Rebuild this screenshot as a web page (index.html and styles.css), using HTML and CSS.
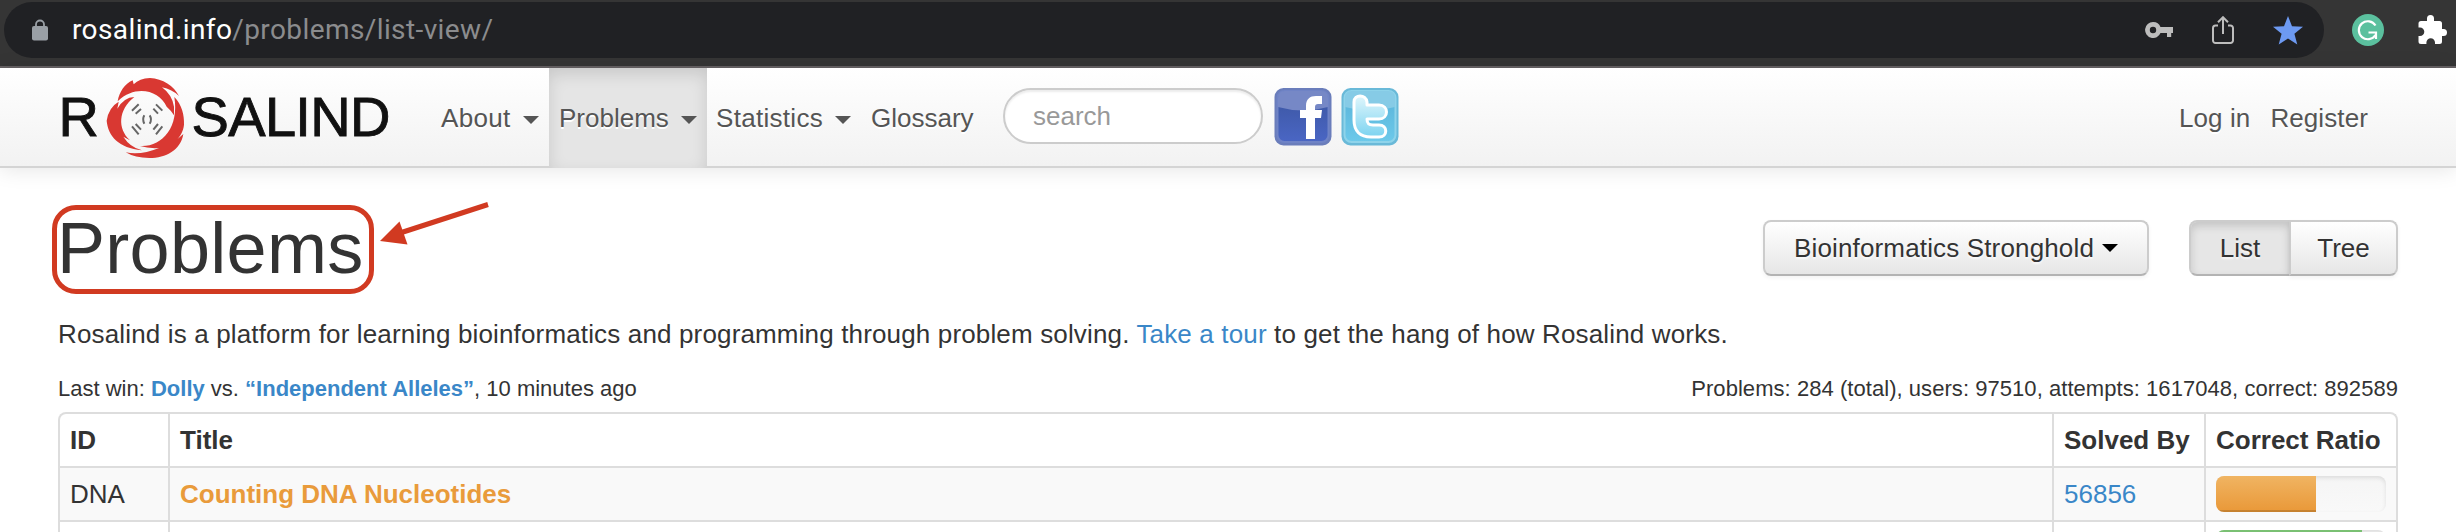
FILE: index.html
```html
<!DOCTYPE html>
<html lang="en">
<head>
<meta charset="utf-8">
<title>Rosalind | Problems</title>
<link rel="stylesheet" href="styles.css">
</head>
<body>
<div class="browser">
  <div class="omnibox">
    <svg class="lock" width="16" height="22" viewBox="0 0 16 22"><path d="M4 9V5.500a4 4 0 0 1 8 0V9" fill="none" stroke="#9aa0a6" stroke-width="1.800"/><rect y="7" width="16" height="14.500" rx="2" fill="#9aa0a6"/></svg>
    <span class="url"><span class="host">rosalind.info</span><span class="path">/problems/list-view/</span></span>
    <span class="tools">
      <svg width="28" height="16" viewBox="0 0 28 16"><path fill="#bdbdbd" fill-rule="evenodd" d="M8 0a8 8 0 1 0 7.500 11H22v4h4.200v-4H28V5H15.500A8 8 0 0 0 8 0Zm0 4.800a3.200 3.200 0 1 1 0 6.400 3.200 3.200 0 0 1 0-6.400Z"/></svg>
      <svg width="22" height="28" viewBox="0 0 22 28"><g fill="none" stroke="#bdbdbd" stroke-width="2"><path d="M6 9.500H3.500A2.500 2.500 0 0 0 1 12v12.500A2.500 2.500 0 0 0 3.500 27h15a2.500 2.500 0 0 0 2.500-2.500V12a2.500 2.500 0 0 0-2.500-2.500H16M11 18V1.500M6 6.200l5-5 5 5"/></g></svg>
      <svg width="30" height="29" viewBox="0 0 30 29"><path fill="#6d9af2" d="m15 0 4 10.300 11 .5-8.600 6.900L24.300 28.500 15 22.400 5.700 28.500l2.900-10.800L0 10.800l11-.5Z"/></svg>
    </span>
  </div>
  <svg class="grammarly" width="32" height="32" viewBox="0 0 32 32"><circle cx="16" cy="16" r="16" fill="#5bc09e"/><path d="M23.500 11.500A9 9 0 1 0 23.500 21M16.500 18.500h7.500V25" fill="none" stroke="#fff" stroke-width="2.200"/></svg>
  <svg class="puzzle" width="29" height="29" viewBox="0 0 29 29"><path fill="#fff" d="M3 6h6V3.500a3.500 3.500 0 0 1 7 0V6h5.500A2.500 2.500 0 0 1 24 8.500V14h1.500a3.500 3.500 0 0 1 0 7H24v5.500A2.500 2.500 0 0 1 21.500 29H17v-1.500a4.300 4.300 0 0 0-8.600 0V29H3a2.500 2.500 0 0 1-2.500-2.500V21H2a4.300 4.300 0 0 0 0-8.600H.5V8.500A2.500 2.500 0 0 1 3 6Z"/></svg>
</div>
<nav class="navbar">
  <svg class="logo" width="340" height="92" viewBox="58 72 340 92" role="img" aria-label="Rosalind">
    <text class="logo-text" x="58.500" y="136" textLength="40">R</text>
    <text class="logo-text" x="191.500" y="136" textLength="199">SALIND</text>
    <g transform="scale(.33333)">
      <g fill="#d93832">
        <path d="M353 304C358 276 374 252 398 241L401 253Q418 235 450 234C488 236 522 258 537 288Q516 268 486 262Q516 284 522 320L522 346Q512 330 500 320C478 272 408 252 353 304Z"/>
        <path d="M403 291Q372 292 352 326L356 305Q326 322 320 362C324 408 356 444 426 451Q390 442 370 410L390 421C352 386 354 330 403 291Z"/>
        <path d="M523 291C546 314 553 346 552 374C550 394 540 409 532 418L550 402C542 450 498 474 448 474Q405 474 377 457Q424 466 477 444Q446 446 420 438C486 442 538 382 523 291Z"/>
      </g>
      <g fill="none" stroke="#666" stroke-width="6">
        <path d="M396 332L416 313M407 341L423 327M468 313L487 332M460 326L474 341M396 379L416 403M407 372L423 389M487 379L468 403M474 372L460 389M433 346Q426 358 433 371M449 346Q457 358 449 371"/>
      </g>
    </g>
  </svg>
  <ul class="menu">
    <li class="about"><a>About</a><i class="caret"></i></li>
    <li class="problems active"><a>Problems</a><i class="caret"></i></li>
    <li class="statistics"><a>Statistics</a><i class="caret"></i></li>
    <li class="glossary"><a>Glossary</a></li>
  </ul>
  <div class="search">search</div>
  <div class="social">
    <svg width="58" height="60" viewBox="0 0 58 60">
      <defs><linearGradient id="fb" x2="0" y2="1"><stop stop-color="#3b559f"/><stop offset="1" stop-color="#4a66c4"/></linearGradient></defs>
      <rect x=".5" y="1" width="57" height="57.500" rx="9" fill="#6a7dbb"/><rect x="3.500" y="4" width="51" height="51" rx="7" fill="url(#fb)" stroke="#6f83c6" stroke-width="2"/>
      <path fill="#7688c6" d="M4 11q0-7 7-7h36q7 0 7 7v9q-25 7-50 0Z"/>
      <path fill="#fff" d="M32 52V31h-6v-8h6v-4c0-7 4-10 10-10h6v8h-4c-2 0-3 1-3 3v3h7l-1 8h-6v21Z"/>
    </svg>
    <svg width="58" height="60" viewBox="0 0 58 60">
      <defs><linearGradient id="tw" x2="0" y2="1"><stop stop-color="#58b2d8"/><stop offset="1" stop-color="#6cc9ea"/></linearGradient><linearGradient id="tt" x2="0" y2="1"><stop stop-color="#dff6fc"/><stop offset="1" stop-color="#7cd3f0"/></linearGradient></defs>
      <rect x=".5" y="1" width="57" height="57.500" rx="9" fill="#69b9d8"/><rect x="3.500" y="4" width="51" height="51" rx="7" fill="url(#tw)" stroke="#8ed3ea" stroke-width="2"/>
      <path fill="#86cbe6" d="M4 11q0-7 7-7h36q7 0 7 7v9q-25 7-50 0Z"/>
      <path fill="url(#tt)" stroke="#fff" stroke-width="3" stroke-linejoin="round" d="M13 15c0-8 12-8 13 0v3h12c10 0 10 14 0 14H26c0 5 2 6 6 6h6c9 0 9 12 0 12h-8c-11 0-17-6-17-17Z"/>
    </svg>
  </div>
  <div class="account"><a>Log in</a><a>Register</a></div>
</nav>
<main class="content">
  <header class="heading">
    <h1>Problems<span class="outline"></span>
      <svg class="arrow" width="116" height="50" viewBox="376 200 116 50"><path d="M488 204.500 400 233" stroke="#d13a21" stroke-width="5"/><path d="m380 241 19.500-19.500 8 23Z" fill="#d13a21"/></svg>
    </h1>
    <div class="controls">
      <button class="btn stronghold">Bioinformatics Stronghold<i class="caret"></i></button>
      <div class="group"><button class="btn list">List</button><button class="btn tree">Tree</button></div>
    </div>
  </header>
  <p class="intro">Rosalind is a platform for learning bioinformatics and programming through problem solving. <a>Take a tour</a> to get the hang of how Rosalind works.</p>
  <div class="stats"><span class="last">Last win: <a>Dolly</a> vs. <a>“Independent Alleles”</a>, 10 minutes ago</span><span class="totals">Problems: 284 (total), users: 97510, attempts: 1617048, correct: 892589</span></div>
  <div class="table">
    <div class="row head"><div>ID</div><div>Title</div><div>Solved By</div><div>Correct Ratio</div></div>
    <div class="row odd"><div>DNA</div><div><a class="title">Counting DNA Nucleotides</a></div><div><a>56856</a></div><div><span class="progress"><span class="bar orange" style="width:59%"></span></span></div></div>
    <div class="row last-row"><div></div><div></div><div></div><div><span class="progress"><span class="bar green" style="width:86%"></span></span></div></div>
  </div>
</main>
</body>
</html>
```
FILE: styles.css
```css
* { box-sizing: border-box; }
body { margin: 0; height: 532px; overflow: hidden; background: #fff; color: #333; font: 26px/36px "Liberation Sans", Arial, sans-serif; }
svg { display: block; flex: none; }
a { color: #3a87c8; }

.browser { height: 68px; padding: 2px 9px 0 4px; background: #353535; border-bottom: 2px solid #656163; display: flex; align-items: flex-start; }
.omnibox { width: 2320px; height: 56px; padding: 0 21px 0 28px; border-radius: 28px; background: #202124; display: flex; align-items: center; }
.url { margin-left: 24px; font: 28px/56px Roboto, sans-serif; letter-spacing: .4px; white-space: nowrap; color: #8b8c8e; }
.host { color: #fff; }
.tools { margin-left: auto; display: flex; align-items: center; gap: 39px; }
.grammarly { margin: 12px 0 0 28px; }
.puzzle { margin: 13px 0 0 34px; }

.navbar { height: 100px; padding-left: 58px; display: flex; background: linear-gradient(#fff, #f2f2f2); border-bottom: 2px solid #d4d4d4; box-shadow: 0 2px 20px rgba(0, 0, 0, .1); }
.logo { margin-top: 4px; }
.logo-text { font: 56px "Liberation Sans", Arial, sans-serif; fill: #111; stroke: #111; stroke-width: .9px; }
.menu { margin: 0 0 0 33px; padding: 0; list-style: none; display: flex; }
.menu li { height: 100px; padding: 0 10px; display: flex; line-height: 100px; }
.menu a, .account a { color: #555; text-shadow: 0 2px 0 #fff; }
.about { width: 118px; }
.problems { width: 158px; }
.statistics { width: 154px; }
.glossary { width: 121px; }
.about a { letter-spacing: .3px; }
.statistics a { margin-left: -1px; letter-spacing: .3px; }
.menu .active { background: #e5e5e5; box-shadow: inset 0 6px 16px rgba(0, 0, 0, .125); }
.caret { border: 8px solid transparent; border-top-color: #555; border-bottom: 0; }
.menu .caret { margin: 48px 0 0 auto; }
.search { width: 260px; height: 56px; margin: 20px 0 0 21px; padding-left: 28px; border: 2px solid #ccc; border-radius: 28px; background: #fff; box-shadow: inset 0 2px 2px rgba(0, 0, 0, .075); color: #999; line-height: 52px; }
.social { margin: 19px 0 0 11px; display: flex; gap: 9px; }
.account { margin: 0 88px 0 auto; display: flex; gap: 20px; line-height: 100px; letter-spacing: .1px; }

.content { height: 364px; overflow: hidden; padding: 34px 58px 0; }
.heading { height: 106px; display: flex; justify-content: space-between; }
h1 { position: relative; margin: 4px 0 0 -1px; height: 90px; font-size: 72px; line-height: 84px; font-weight: 400; letter-spacing: .3px; }
.outline { position: absolute; left: -5px; top: -1px; width: 322px; height: 89px; border: 5px solid #d13a21; border-radius: 24px; }
.arrow { position: absolute; left: 319px; top: -6px; }
.controls { padding-top: 18px; display: flex; gap: 40px; }
.btn { height: 56px; margin: 0; padding: 0; border: 2px solid #ccc; border-bottom-color: #b3b3b3; border-radius: 8px; background: linear-gradient(#fff, #e6e6e6); color: #333; font: inherit; text-shadow: 0 2px 2px rgba(255, 255, 255, .75); box-shadow: 0 2px 4px rgba(0, 0, 0, .05); display: flex; align-items: center; justify-content: center; }
.stronghold { width: 386px; letter-spacing: .15px; }
.stronghold .caret { margin-left: 8px; border-top-color: #000; }
.group { display: flex; }
.list { width: 102px; border-radius: 8px 0 0 8px; background: #e6e6e6; box-shadow: inset 0 4px 8px rgba(0, 0, 0, .15); }
.tree { width: 109px; margin-left: -2px; border-radius: 0 8px 8px 0; }

.intro { margin: 8px 0 0; height: 53px; white-space: nowrap; letter-spacing: .15px; }
.stats { height: 43px; display: flex; justify-content: space-between; font-size: 22px; line-height: 40px; white-space: nowrap; }
.last a { font-weight: 700; }
.totals { letter-spacing: .05px; }
.table { width: 2340px; border: 2px solid #ddd; border-bottom: 0; border-radius: 8px 8px 0 0; }
.row { height: 54px; display: grid; grid-template-columns: 108px 1884px 152px 192px; border-bottom: 2px solid #ddd; }
.row > div { padding: 8px 10px; white-space: nowrap; }
.row > div + div { border-left: 2px solid #ddd; }
.head { font-weight: 700; }
.odd { background: #f9f9f9; }
.last-row { height: 10px; border-bottom: 0; overflow: hidden; }
.title { color: #e99b3b; font-weight: 700; }
.progress { display: block; width: 170px; height: 36px; overflow: hidden; border-radius: 8px; background: linear-gradient(#f5f5f5, #f9f9f9); box-shadow: inset 0 2px 4px rgba(0, 0, 0, .1); }
.bar { display: block; height: 36px; box-shadow: inset 0 -2px 0 rgba(0, 0, 0, .15); }
.orange { background: linear-gradient(#f0b462, #e99838); }
.green { background: linear-gradient(#7bc174, #57a957); }
```
